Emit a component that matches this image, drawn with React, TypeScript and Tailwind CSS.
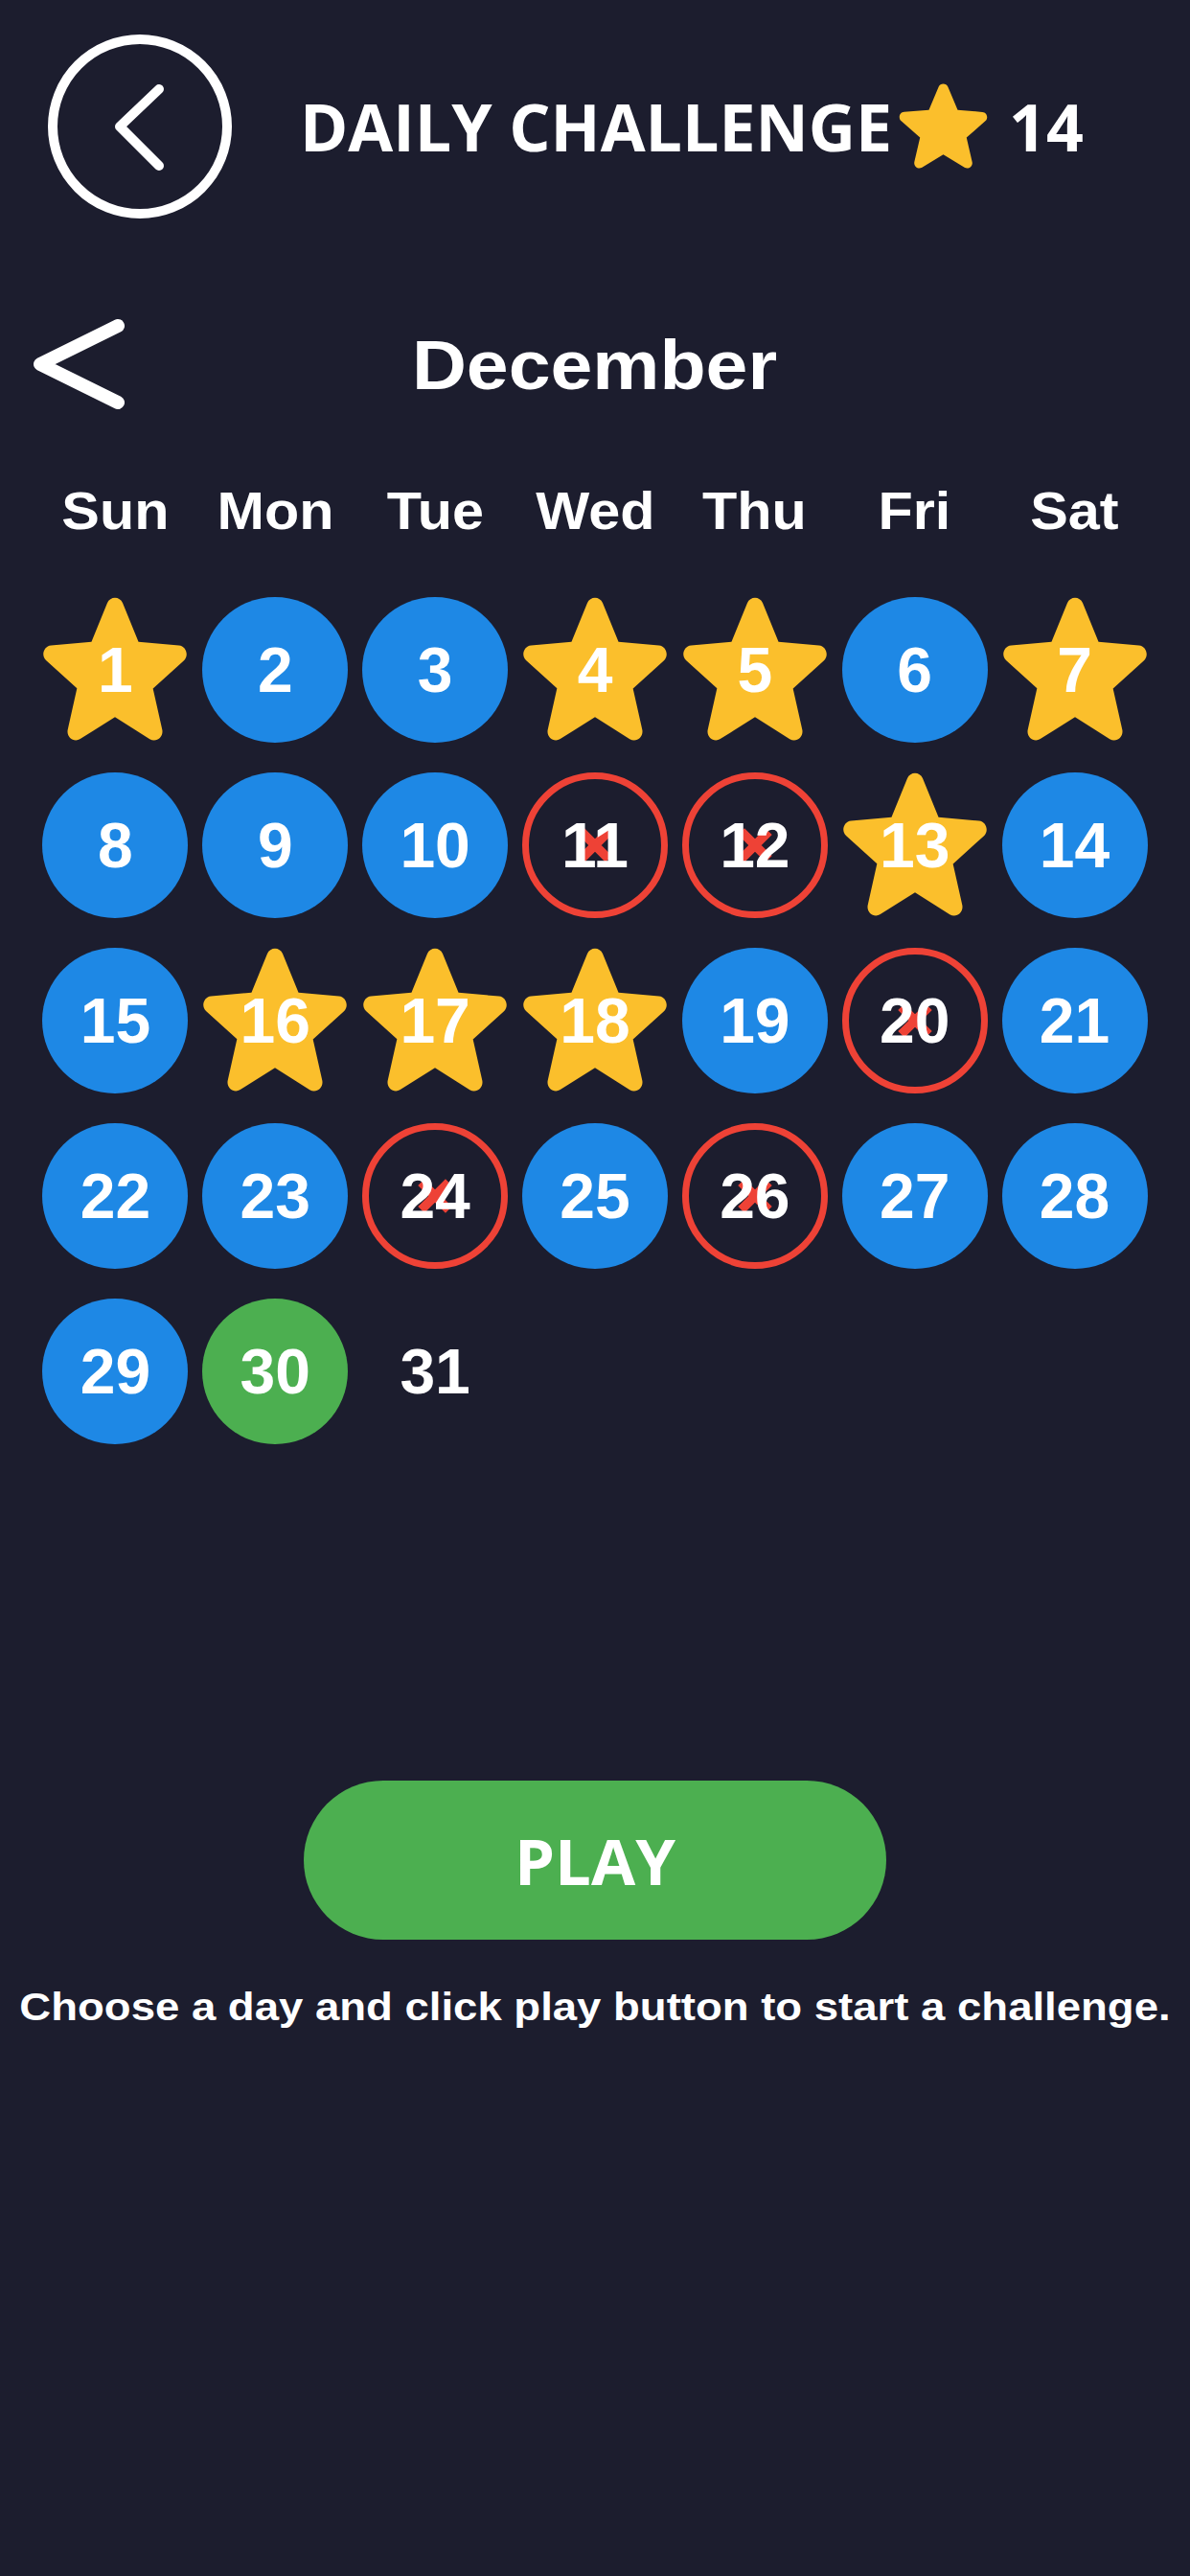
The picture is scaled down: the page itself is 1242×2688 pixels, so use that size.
const STAR_PATH =
  'M12 17.27l4.15 2.51c.76.46 1.69-.22 1.49-1.08l-1.1-4.72 3.67-3.18c.67-.58.31-1.68-.57-1.75l-4.83-.41-1.89-4.46c-.34-.81-1.5-.81-1.84 0L9.19 8.63l-4.83.41c-.88.07-1.24 1.17-.57 1.75l3.67 3.18-1.1 4.72c-.2.86.73 1.54 1.49 1.08l4.15-2.5z'

type DayState = 'star' | 'done' | 'missed' | 'today' | 'future'

const stars = [1, 4, 5, 7, 13, 16, 17, 18]
const missed = [11, 12, 20, 24, 26]

function stateOf(day: number): DayState {
  if (stars.includes(day)) return 'star'
  if (missed.includes(day)) return 'missed'
  if (day === 30) return 'today'
  if (day > 30) return 'future'
  return 'done'
}

// étoile arrondie, étirée pour remplir sa boîte
function Star({ className }: { className?: string }) {
  return (
    <svg viewBox="3.3 3.5 17.4 16.7" preserveAspectRatio="none" className={className}>
      <path d={STAR_PATH} fill="#fbbf2c" />
    </svg>
  )
}

function Day({ day }: { day: number }) {
  const state = stateOf(day)
  const number = (
    <span className="relative font-['Liberation_Sans',Arial,sans-serif] text-[66px] font-bold leading-none text-white">
      {day}
    </span>
  )

  if (state === 'star') {
    return (
      <div className="relative flex h-[152px] w-[152px] items-center justify-center">
        <Star className="absolute inset-0 h-full w-full" />
        {number}
      </div>
    )
  }

  if (state === 'missed') {
    return (
      <div className="relative flex h-[152px] w-[152px] items-center justify-center rounded-full border-[7px] border-[#ee4236]">
        {/* croix rouge sous le chiffre */}
        <svg viewBox="0 0 46 46" className="absolute h-[44px] w-[44px]">
          <path d="M8 8L38 38M38 8L8 38" stroke="#ee4236" strokeWidth="10" strokeLinecap="butt" />
        </svg>
        {number}
      </div>
    )
  }

  const bg = state === 'today' ? 'bg-[#4caf50]' : state === 'done' ? 'bg-[#1e88e5]' : ''
  return (
    <div className={`flex h-[152px] w-[152px] items-center justify-center rounded-full ${bg}`}>
      {number}
    </div>
  )
}

export default function App() {
  const weekdays = ['Sun', 'Mon', 'Tue', 'Wed', 'Thu', 'Fri', 'Sat']
  const days = Array.from({ length: 31 }, (_, i) => i + 1)

  return (
    <div className="min-h-[2688px] w-full overflow-hidden bg-[#1c1d2e] text-white">
      {/* en-tête */}
      <div className="flex items-center pl-[49px] pt-[35px]">
        <svg viewBox="0 0 194 194" className="h-[194px] w-[194px] shrink-0">
          <circle cx="97" cy="97" r="91" fill="none" stroke="white" strokeWidth="10" />
          <path
            d="M117 58L76 97L117 138"
            fill="none"
            stroke="white"
            strokeWidth="10"
            strokeLinecap="round"
            strokeLinejoin="round"
          />
        </svg>
        <h1 className="ml-[70px] font-['Open_Sans',sans-serif] text-[68px] font-bold leading-none">
          DAILY CHALLENGE
        </h1>
        <Star className="ml-[7px] h-[90px] w-[93px]" />
        <span className="ml-[22px] font-['Open_Sans',sans-serif] text-[68px] font-bold leading-none">14</span>
      </div>

      {/* mois */}
      <div className="mt-[104px] grid h-[94px] grid-cols-[1fr_auto_1fr] items-center">
        <svg viewBox="0 0 100 94" className="ml-[30px] h-[94px] w-[100px]">
          <path
            d="M93 7L12 47L93 87"
            fill="none"
            stroke="white"
            strokeWidth="14"
            strokeLinecap="round"
            strokeLinejoin="round"
          />
        </svg>
        <div className="scale-x-[1.08] font-['Liberation_Sans',Arial,sans-serif] text-[73px] font-bold leading-none">
          December
        </div>
        <div />
      </div>

      {/* jours de la semaine */}
      <div className="mt-[78px] grid grid-cols-7 px-[37px]">
        {weekdays.map((w) => (
          <div
            key={w}
            className="scale-x-[1.06] text-center font-['Liberation_Sans',Arial,sans-serif] text-[56px] font-bold leading-none"
          >
            {w}
          </div>
        ))}
      </div>

      {/* calendrier */}
      <div className="mt-[62px] grid grid-cols-7 gap-y-[31px] px-[37px]">
        {days.map((d) => (
          <div key={d} className="flex justify-center">
            <Day day={d} />
          </div>
        ))}
      </div>

      {/* bouton */}
      <div className="mt-[351px] flex justify-center">
        <button className="flex h-[166px] w-[608px] items-center justify-center rounded-full bg-[#4caf50] font-['Open_Sans',sans-serif] text-[67px] font-bold leading-none text-white">
          PLAY
        </button>
      </div>

      <p className="mt-[50px] scale-x-[1.11] whitespace-nowrap text-center font-['Liberation_Sans',Arial,sans-serif] text-[41px] font-bold leading-none">
        Choose a day and click play button to start a challenge.
      </p>
    </div>
  )
}
